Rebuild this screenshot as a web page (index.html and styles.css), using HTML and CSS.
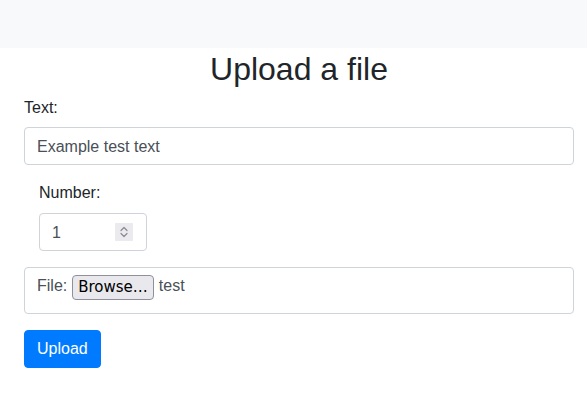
FILE: index.html
```html
<!DOCTYPE html>
<html>
<head>
<meta charset="utf-8">
<link rel="stylesheet" href="styles.css">
</head>
<body>
<nav class="navbar"></nav>
<main class="container">
  <h2 class="title">Upload a file</h2>
  <div class="group">
    <label class="label">Text:</label>
    <div class="control">Example test text</div>
  </div>
  <div class="group indent">
    <label class="label">Number:</label>
    <div class="control number">
      <span>1</span>
      <span class="spin">
        <svg width="10" height="14" viewBox="0 0 10 14" fill="none" stroke="#8a8a92" stroke-width="1.2" stroke-linecap="round" stroke-linejoin="round">
          <path d="M2 5.5 L5 2.5 L8 5.5"/>
          <path d="M2 8.5 L5 11.5 L8 8.5"/>
        </svg>
      </span>
    </div>
  </div>
  <div class="group filebox">
    <span class="filelabel">File:</span>
    <span class="browse">Browse…</span>
    <span class="filename">test</span>
  </div>
  <button class="btn">Upload</button>
</main>
</body>
</html>
```
FILE: styles.css
```css
html, body {
  margin: 0;
  padding: 0;
  background: #fff;
}
body {
  font-family: "Liberation Sans", Arial, sans-serif;
  font-size: 16px;
  line-height: 1.5;
  color: #212529;
}
.navbar {
  height: 48px;
  background: #f8f9fa;
}
.container {
  padding: 0 13px 0 24px;
}
.title {
  margin: 0 0 8px;
  padding-top: 2px;
  font-size: 32px;
  font-weight: 400;
  line-height: 1.2;
  text-align: center;
}
.group {
  margin-bottom: 16px;
}
.label {
  display: block;
  margin-bottom: 7px;
}
.control {
  box-sizing: border-box;
  height: 38px;
  padding: 7px 12px 5px;
  border: 1px solid #ced4da;
  border-radius: 4px;
  color: #495057;
  display: flex;
  align-items: center;
}
.indent {
  padding-left: 15px;
}
.indent .label {
  margin-bottom: 8px;
}
.number {
  width: 108px;
  justify-content: space-between;
  padding-right: 13px;
}
.spin {
  width: 18px;
  height: 18px;
  margin-top: -2px;
  background: #ebebef;
  display: flex;
  align-items: center;
  justify-content: center;
}
.filebox {
  box-sizing: border-box;
  height: 47px;
  border: 1px solid #ced4da;
  border-radius: 4px;
  padding: 6px 12px;
  color: #495057;
  display: flex;
  align-items: flex-start;
  gap: 5px;
}
.filelabel {
  line-height: 24px;
}
.browse {
  box-sizing: border-box;
  height: 25px;
  padding: 0 5px;
  border: 1px solid #8f8f9d;
  border-radius: 4px;
  background: #e9e9ed;
  color: #000;
  font-family: "DejaVu Sans", sans-serif;
  font-size: 15px;
  line-height: 23px;
  margin-top: 1px;
}
.filename {
  line-height: 24px;
}
.btn {
  display: block;
  box-sizing: border-box;
  height: 38px;
  padding: 6px 12px;
  border: 1px solid #007bff;
  border-radius: 4px;
  background: #007bff;
  color: #fff;
  font-family: "Liberation Sans", Arial, sans-serif;
  font-size: 16px;
  line-height: 24px;
}
```
